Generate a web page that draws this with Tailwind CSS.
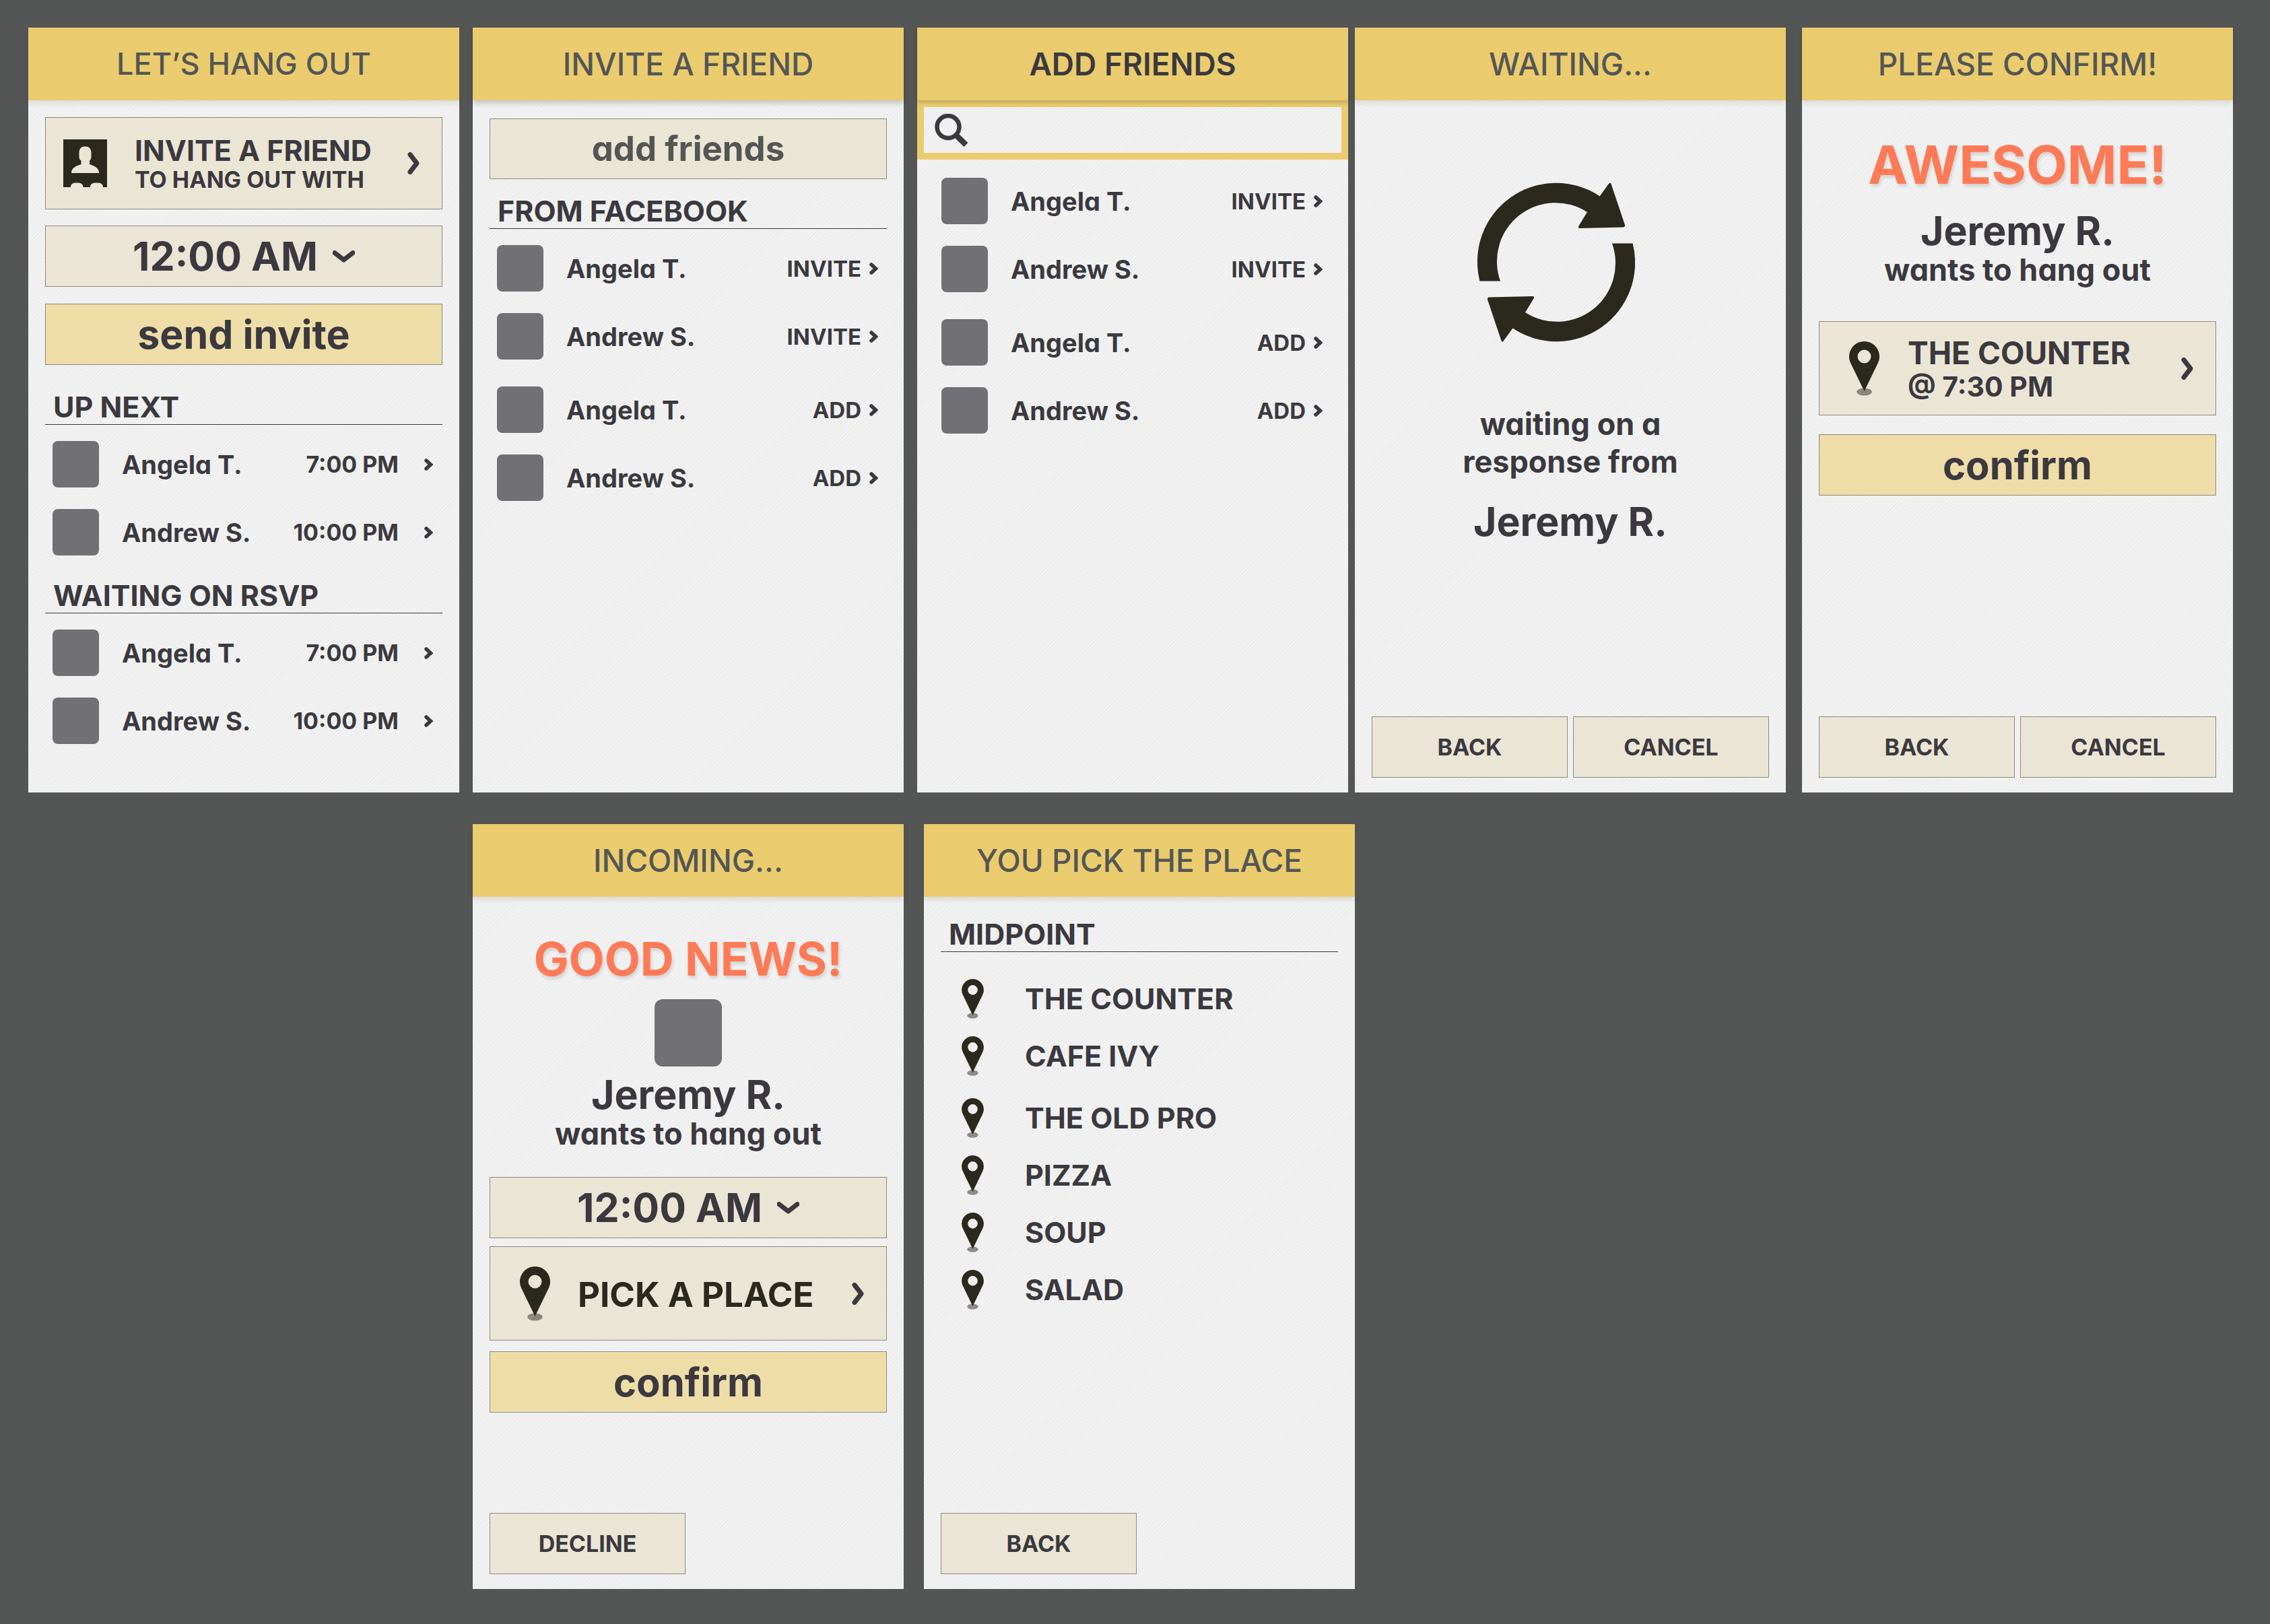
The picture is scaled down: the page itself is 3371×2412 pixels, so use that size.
<!DOCTYPE html>
<html lang="en">
<head>
<meta charset="utf-8">
<title>Hang Out – app screens</title>
<script src="https://cdn.jsdelivr.net/npm/@tailwindcss/browser@4"></script>
</head>
<body class="min-h-screen bg-[#545655] font-['Inter','Open_Sans',sans-serif] font-bold text-[#3b393f] [font-feature-settings:'cv11']">

<svg class="hidden" aria-hidden="true">
  <symbol id="pin" viewBox="0 0 45 81">
    <ellipse cx="22.500" cy="75" rx="11.300" ry="5.500" fill="#2b281e" fill-opacity=".5"/>
    <path fill="#2b281e" fill-rule="evenodd" d="M22.500 0A22.500 22.500 0 0 1 42.900 32L22.500 74L2.100 32A22.500 22.500 0 0 1 22.500 0ZM22.500 12.500a10 10 0 1 0 0 20a10 10 0 1 0 0-20Z"/>
  </symbol>
  <symbol id="next" viewBox="0 0 18 33"><path d="M4 3.500L14 16.500L4 29.500" fill="none" stroke="#3b393f" stroke-width="7" stroke-linecap="round" stroke-linejoin="round"/></symbol>
  <symbol id="more" viewBox="0 0 13 18"><path d="M3 3L9.500 9L3 15" fill="none" stroke="#3b393f" stroke-width="5.500" stroke-linecap="round" stroke-linejoin="miter"/></symbol>
  <symbol id="down" viewBox="0 0 33 20"><path d="M3 4.500L16.500 15L30 4.500" fill="none" stroke="#3b393f" stroke-width="7" stroke-linecap="round" stroke-linejoin="round"/></symbol>
</svg>

<main class="flex flex-col gap-[47px] pt-[41px] pr-[55px] pb-[52px] pl-[42px]">
  <div class="flex">

    <!-- Home -->
    <section class="flex min-h-[1136px] min-w-0 flex-1 flex-col bg-[repeating-linear-gradient(135deg,#f3f3f3_0_2px,#ededed_2px_4px)]">
      <header class="flex h-[108px] items-center justify-center bg-[#eacc6e] shadow-[0_4px_8px_rgba(0,0,0,0.1)]"><h1 class="text-[45px] leading-[56px] font-medium text-[#545655]">LET’S HANG OUT</h1></header>
      <div class="flex flex-1 flex-col px-[25px] pt-[25px]">
        <button class="flex h-[137px] items-center border border-[#8b8a85] bg-[#ebe5d5] pr-[33px] pl-[26px] text-left">
          <svg class="h-[71px] w-[65px]" viewBox="0 0 65 71" aria-hidden="true"><path fill="#2b281e" fill-rule="evenodd" d="M0 0H65V71H59C59 66 56 64.500 49.500 64.500S40 66 40 71H29.500C29.500 66 26 64.500 20 64.500S11 66 11 71H0ZM32.500 10.400C38 10.400 41.500 13 41.500 20V26C41.500 29 40 31 39 31.500V37C46 39.500 53 42 53 50H12C12 42 19 39.500 26.500 37V31.500C25 31 23.500 29 23.500 26V20C23.500 13 27 10.400 32.500 10.400Z"/></svg>
          <span class="ml-[41px] flex-1 pt-1"><span class="block text-[43px] leading-[44px]">INVITE A FRIEND</span><span class="block text-[34px] leading-[44px]">TO HANG OUT WITH</span></span>
          <svg class="h-[33px] w-[18px]" aria-hidden="true"><use href="#next"/></svg>
        </button>
        <label class="mt-6 flex h-[91px] items-center justify-center gap-[22px] border border-[#8b8a85] bg-[#ebe5d5]">
          <select aria-label="Time" class="field-sizing-content appearance-none bg-transparent text-[59px] leading-[64px]"><option>12:00 AM</option></select>
          <svg class="h-5 w-[33px]" aria-hidden="true"><use href="#down"/></svg>
        </label>
        <button class="mt-[25px] h-[91px] border border-[#8b8a85] bg-[#efdda8] text-[59px] leading-[64px]">send invite</button>

        <h2 class="mt-9 border-b border-[#3b393f] pl-3 text-[43px] leading-[52px]">UP NEXT</h2>
        <ul class="mt-6 flex flex-col gap-8 pr-[14px] pl-[11px]">
          <li><a href="#" class="flex h-[69px] items-center"><span class="size-[69px] rounded-lg bg-[#717074]"></span><span class="ml-[34px] flex-1 text-[38px] leading-[48px]">Angela T.</span><span class="text-[34px] leading-[48px]">7:00 PM</span><svg class="ml-[38px] h-[18px] w-[13px]" aria-hidden="true"><use href="#more"/></svg></a></li>
          <li><a href="#" class="flex h-[69px] items-center"><span class="size-[69px] rounded-lg bg-[#717074]"></span><span class="ml-[34px] flex-1 text-[38px] leading-[48px]">Andrew S.</span><span class="text-[34px] leading-[48px]">10:00 PM</span><svg class="ml-[38px] h-[18px] w-[13px]" aria-hidden="true"><use href="#more"/></svg></a></li>
        </ul>
        <h2 class="mt-[33px] border-b border-[#3b393f] pl-3 text-[43px] leading-[52px]">WAITING ON RSVP</h2>
        <ul class="mt-6 flex flex-col gap-8 pr-[14px] pl-[11px]">
          <li><a href="#" class="flex h-[69px] items-center"><span class="size-[69px] rounded-lg bg-[#717074]"></span><span class="ml-[34px] flex-1 text-[38px] leading-[48px]">Angela T.</span><span class="text-[34px] leading-[48px]">7:00 PM</span><svg class="ml-[38px] h-[18px] w-[13px]" aria-hidden="true"><use href="#more"/></svg></a></li>
          <li><a href="#" class="flex h-[69px] items-center"><span class="size-[69px] rounded-lg bg-[#717074]"></span><span class="ml-[34px] flex-1 text-[38px] leading-[48px]">Andrew S.</span><span class="text-[34px] leading-[48px]">10:00 PM</span><svg class="ml-[38px] h-[18px] w-[13px]" aria-hidden="true"><use href="#more"/></svg></a></li>
        </ul>
      </div>
    </section>

    <!-- Invite a friend -->
    <section class="ml-5 flex min-h-[1136px] min-w-0 flex-1 flex-col bg-[repeating-linear-gradient(135deg,#f3f3f3_0_2px,#ededed_2px_4px)]">
      <header class="flex h-[108px] items-center justify-center bg-[#eacc6e] shadow-[0_4px_8px_rgba(0,0,0,0.2)]"><h1 class="text-[46px] leading-[56px] font-medium text-[#545655]">INVITE A FRIEND</h1></header>
      <div class="flex flex-1 flex-col px-[25px] pt-[27px]">
        <button class="h-[90px] border border-[#8b8a85] bg-[#ebe5d5] text-[51px] leading-[64px] text-[#545655]">add friends</button>
        <h2 class="mt-[21px] border-b border-[#3b393f] pl-3 text-[43px] leading-[52px]">FROM FACEBOOK</h2>
        <ul class="mt-6 flex flex-col gap-8 pr-[13px] pl-[11px]">
          <li class="flex h-[69px] items-center"><span class="size-[69px] rounded-lg bg-[#717074]"></span><span class="ml-[34px] flex-1 text-[38px] leading-[48px]">Angela T.</span><a href="#" class="flex items-center gap-3 text-[33px] leading-[48px]">INVITE<svg class="h-[18px] w-[13px]" aria-hidden="true"><use href="#more"/></svg></a></li>
          <li class="flex h-[69px] items-center"><span class="size-[69px] rounded-lg bg-[#717074]"></span><span class="ml-[34px] flex-1 text-[38px] leading-[48px]">Andrew S.</span><a href="#" class="flex items-center gap-3 text-[33px] leading-[48px]">INVITE<svg class="h-[18px] w-[13px]" aria-hidden="true"><use href="#more"/></svg></a></li>
        </ul>
        <ul class="mt-10 flex flex-col gap-8 pr-[13px] pl-[11px]">
          <li class="flex h-[69px] items-center"><span class="size-[69px] rounded-lg bg-[#717074]"></span><span class="ml-[34px] flex-1 text-[38px] leading-[48px]">Angela T.</span><a href="#" class="flex items-center gap-3 text-[33px] leading-[48px]">ADD<svg class="h-[18px] w-[13px]" aria-hidden="true"><use href="#more"/></svg></a></li>
          <li class="flex h-[69px] items-center"><span class="size-[69px] rounded-lg bg-[#717074]"></span><span class="ml-[34px] flex-1 text-[38px] leading-[48px]">Andrew S.</span><a href="#" class="flex items-center gap-3 text-[33px] leading-[48px]">ADD<svg class="h-[18px] w-[13px]" aria-hidden="true"><use href="#more"/></svg></a></li>
        </ul>
      </div>
    </section>

    <!-- Add friends -->
    <section class="ml-5 flex min-h-[1136px] min-w-0 flex-1 flex-col bg-[repeating-linear-gradient(135deg,#f3f3f3_0_2px,#ededed_2px_4px)]">
      <header class="relative z-10 flex h-[108px] items-center justify-center bg-[#eacc6e] shadow-[0_3px_6px_rgba(0,0,0,0.2)]"><h1 class="text-[46px] leading-[56px] font-semibold">ADD FRIENDS</h1></header>
      <label class="flex h-[88px] items-center gap-4 border-10 border-[#eacc6e] pl-4">
        <svg class="h-[49px] w-[50px]" viewBox="0 0 50 49" fill="none" stroke="#3b393f" aria-hidden="true"><circle cx="20" cy="19.500" r="16.500" stroke-width="6.500"/><path d="M31.500 31.500L46.500 46" stroke-width="8.500"/></svg>
        <input type="search" aria-label="Search friends" class="h-full min-w-0 flex-1 bg-transparent text-[38px] outline-none">
      </label>
      <div class="flex flex-1 flex-col px-[25px] pt-[27px]">
        <ul class="flex flex-col gap-8 pr-[13px] pl-[11px]">
          <li class="flex h-[69px] items-center"><span class="size-[69px] rounded-lg bg-[#717074]"></span><span class="ml-[34px] flex-1 text-[38px] leading-[48px]">Angela T.</span><a href="#" class="flex items-center gap-3 text-[33px] leading-[48px]">INVITE<svg class="h-[18px] w-[13px]" aria-hidden="true"><use href="#more"/></svg></a></li>
          <li class="flex h-[69px] items-center"><span class="size-[69px] rounded-lg bg-[#717074]"></span><span class="ml-[34px] flex-1 text-[38px] leading-[48px]">Andrew S.</span><a href="#" class="flex items-center gap-3 text-[33px] leading-[48px]">INVITE<svg class="h-[18px] w-[13px]" aria-hidden="true"><use href="#more"/></svg></a></li>
        </ul>
        <ul class="mt-10 flex flex-col gap-8 pr-[13px] pl-[11px]">
          <li class="flex h-[69px] items-center"><span class="size-[69px] rounded-lg bg-[#717074]"></span><span class="ml-[34px] flex-1 text-[38px] leading-[48px]">Angela T.</span><a href="#" class="flex items-center gap-3 text-[33px] leading-[48px]">ADD<svg class="h-[18px] w-[13px]" aria-hidden="true"><use href="#more"/></svg></a></li>
          <li class="flex h-[69px] items-center"><span class="size-[69px] rounded-lg bg-[#717074]"></span><span class="ml-[34px] flex-1 text-[38px] leading-[48px]">Andrew S.</span><a href="#" class="flex items-center gap-3 text-[33px] leading-[48px]">ADD<svg class="h-[18px] w-[13px]" aria-hidden="true"><use href="#more"/></svg></a></li>
        </ul>
      </div>
    </section>

    <!-- Waiting -->
    <section class="ml-[10px] flex min-h-[1136px] min-w-0 flex-1 flex-col bg-[repeating-linear-gradient(135deg,#f3f3f3_0_2px,#ededed_2px_4px)]">
      <header class="flex h-[108px] items-center justify-center bg-[#eacc6e] shadow-[0_4px_8px_rgba(0,0,0,0.1)]"><h1 class="text-[46px] leading-[56px] font-medium text-[#545655]">WAITING...</h1></header>
      <div class="flex flex-1 flex-col items-center px-[25px] pt-[122px] pb-[22px] text-center">
        <svg class="mr-[42px] h-[237px] w-[234px]" viewBox="0 0 234 237" fill="#2b281e" aria-hidden="true"><path id="arrow" d="M3.400 146.400A117 117 0 0 1 181.600 20.400L195 2Q197-1 198.500 2L219 63Q219.500 66 217 66.500L151.500 68Q149 67.500 150.500 64.500L163 44A87 87 0 0 0 34 146.400Z"/><use href="#arrow" transform="rotate(180 117 118.500)"/></svg>
        <p class="mt-[94px] text-[45px] leading-[56px]">waiting on a<br>response from</p>
        <p class="mt-[31px] text-[59px] leading-[60px]">Jeremy R.</p>
        <footer class="mt-auto flex w-full gap-2">
          <button class="h-[91px] flex-1 border border-[#8b8a85] bg-[#ebe5d5] text-[34px] leading-[48px]">BACK</button>
          <button class="h-[91px] flex-1 border border-[#8b8a85] bg-[#ebe5d5] text-[34px] leading-[48px]">CANCEL</button>
        </footer>
      </div>
    </section>

    <!-- Please confirm -->
    <section class="ml-6 flex min-h-[1136px] min-w-0 flex-1 flex-col bg-[repeating-linear-gradient(135deg,#f3f3f3_0_2px,#ededed_2px_4px)]">
      <header class="flex h-[108px] items-center justify-center bg-[#eacc6e] shadow-[0_4px_8px_rgba(0,0,0,0.1)]"><h1 class="text-[46px] leading-[56px] font-medium text-[#545655]">PLEASE CONFIRM!</h1></header>
      <div class="flex flex-1 flex-col px-[25px] pt-[55px] pb-[22px]">
        <p class="text-center text-[79px] leading-[80px] text-[#ff7a56] text-shadow-[2px_4px_4px_rgba(0,0,0,0.12)]">AWESOME!</p>
        <p class="mt-[29px] text-center text-[59px] leading-[60px]">Jeremy R.</p>
        <p class="text-center text-[45px] leading-[56px]">wants to hang out</p>
        <button class="mt-12 flex h-[140px] items-center border border-[#8b8a85] bg-[#ebe5d5] pr-[33px] pl-[44px] text-left">
          <svg class="h-[81px] w-[45px]" aria-hidden="true"><use href="#pin"/></svg>
          <span class="ml-[42px] flex-1 pt-1"><span class="block text-[46px] leading-[50px]">THE COUNTER</span><span class="block text-[41px] leading-[50px]">@ 7:30 PM</span></span>
          <svg class="h-[33px] w-[18px]" aria-hidden="true"><use href="#next"/></svg>
        </button>
        <button class="mt-7 h-[91px] border border-[#8b8a85] bg-[#efdda8] text-[58px] leading-[64px]">confirm</button>
        <footer class="mt-auto flex w-full gap-2">
          <button class="h-[91px] flex-1 border border-[#8b8a85] bg-[#ebe5d5] text-[34px] leading-[48px]">BACK</button>
          <button class="h-[91px] flex-1 border border-[#8b8a85] bg-[#ebe5d5] text-[34px] leading-[48px]">CANCEL</button>
        </footer>
      </div>
    </section>
  </div>

  <div class="flex">
    <div class="flex-1"></div>

    <!-- Incoming -->
    <section class="ml-5 flex min-h-[1136px] min-w-0 flex-1 flex-col bg-[repeating-linear-gradient(135deg,#f3f3f3_0_2px,#ededed_2px_4px)]">
      <header class="flex h-[108px] items-center justify-center bg-[#eacc6e] shadow-[0_4px_8px_rgba(0,0,0,0.1)]"><h1 class="text-[46px] leading-[56px] font-medium text-[#545655]">INCOMING...</h1></header>
      <div class="flex flex-1 flex-col px-[25px] pt-[52px] pb-[22px]">
        <p class="text-center text-[69px] leading-[80px] text-[#ff7a56] text-shadow-[2px_4px_4px_rgba(0,0,0,0.12)]">GOOD NEWS!</p>
        <span class="mt-5 size-[100px] self-center rounded-xl bg-[#717074]"></span>
        <p class="mt-3 text-center text-[59px] leading-[60px]">Jeremy R.</p>
        <p class="text-center text-[45px] leading-[56px]">wants to hang out</p>
        <label class="mt-9 flex h-[91px] items-center justify-center gap-[22px] border border-[#8b8a85] bg-[#ebe5d5]">
          <select aria-label="Time" class="field-sizing-content appearance-none bg-transparent text-[59px] leading-[64px]"><option>12:00 AM</option></select>
          <svg class="h-5 w-[33px]" aria-hidden="true"><use href="#down"/></svg>
        </label>
        <button class="mt-3 flex h-[140px] items-center border border-[#8b8a85] bg-[#ebe5d5] pr-[33px] pl-[44px] text-left text-[#2b281e]">
          <svg class="h-[81px] w-[45px]" aria-hidden="true"><use href="#pin"/></svg>
          <span class="ml-[41px] flex-1 pt-1 text-[51px] leading-[56px]">PICK A PLACE</span>
          <svg class="h-[33px] w-[18px]" aria-hidden="true"><use href="#next"/></svg>
        </button>
        <button class="mt-4 h-[91px] border border-[#8b8a85] bg-[#efdda8] text-[58px] leading-[64px]">confirm</button>
        <footer class="mt-auto grid grid-cols-2 gap-2">
          <button class="h-[91px] border border-[#8b8a85] bg-[#ebe5d5] text-[34px] leading-[48px]">DECLINE</button>
        </footer>
      </div>
    </section>

    <!-- Pick the place -->
    <section class="ml-[30px] flex min-h-[1136px] min-w-0 flex-1 flex-col bg-[repeating-linear-gradient(135deg,#f3f3f3_0_2px,#ededed_2px_4px)]">
      <header class="flex h-[108px] items-center justify-center bg-[#eacc6e] shadow-[0_4px_8px_rgba(0,0,0,0.1)]"><h1 class="text-[46px] leading-[56px] font-medium text-[#545655]">YOU PICK THE PLACE</h1></header>
      <div class="flex flex-1 flex-col px-[25px] pt-[29px] pb-[22px]">
        <h2 class="border-b border-[#3b393f] pl-3 text-[43px] leading-[52px]">MIDPOINT</h2>
        <ul class="mt-10 flex flex-col gap-[26px] pl-[31px]">
          <li><a href="#" class="flex items-center gap-[61px] text-[43px] leading-[59px]"><svg class="h-[59px] w-[33px]" aria-hidden="true"><use href="#pin"/></svg>THE COUNTER</a></li>
          <li><a href="#" class="flex items-center gap-[61px] text-[43px] leading-[59px]"><svg class="h-[59px] w-[33px]" aria-hidden="true"><use href="#pin"/></svg>CAFE IVY</a></li>
        </ul>
        <ul class="mt-[33px] flex flex-col gap-[26px] pl-[31px]">
          <li><a href="#" class="flex items-center gap-[61px] text-[43px] leading-[59px]"><svg class="h-[59px] w-[33px]" aria-hidden="true"><use href="#pin"/></svg>THE OLD PRO</a></li>
          <li><a href="#" class="flex items-center gap-[61px] text-[43px] leading-[59px]"><svg class="h-[59px] w-[33px]" aria-hidden="true"><use href="#pin"/></svg>PIZZA</a></li>
          <li><a href="#" class="flex items-center gap-[61px] text-[43px] leading-[59px]"><svg class="h-[59px] w-[33px]" aria-hidden="true"><use href="#pin"/></svg>SOUP</a></li>
          <li><a href="#" class="flex items-center gap-[61px] text-[43px] leading-[59px]"><svg class="h-[59px] w-[33px]" aria-hidden="true"><use href="#pin"/></svg>SALAD</a></li>
        </ul>
        <footer class="mt-auto grid grid-cols-2 gap-2">
          <button class="h-[91px] border border-[#8b8a85] bg-[#ebe5d5] text-[34px] leading-[48px]">BACK</button>
        </footer>
      </div>
    </section>

    <div class="flex-1"></div>
    <div class="ml-6 flex-1"></div>
  </div>
</main>
</body>
</html>
